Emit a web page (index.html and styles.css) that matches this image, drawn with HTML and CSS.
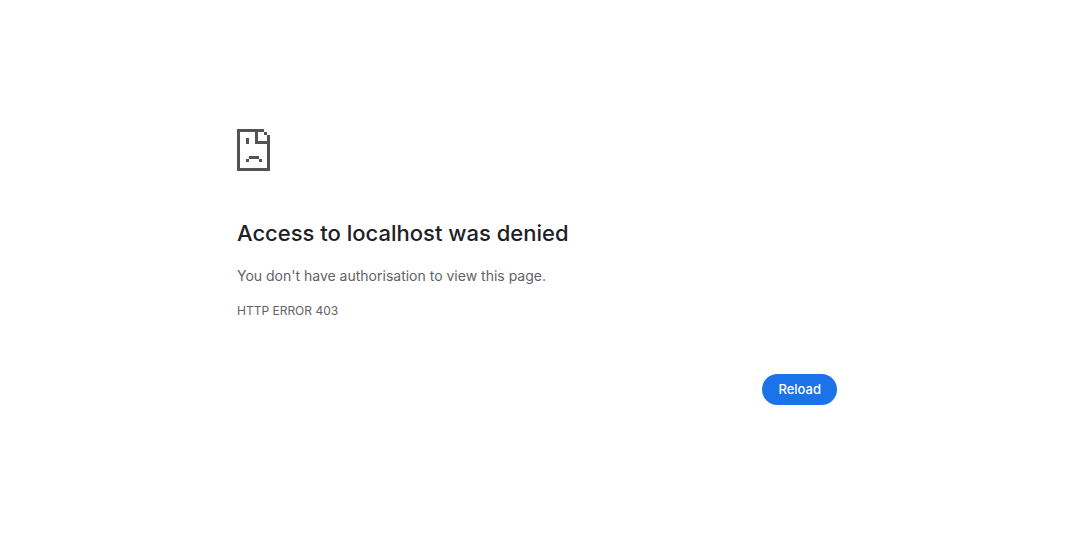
FILE: index.html
```html
<!DOCTYPE html>
<html lang="en-GB">
<head>
<meta charset="utf-8">
<meta name="viewport" content="width=device-width, initial-scale=1">
<title>localhost</title>
<link rel="stylesheet" href="styles.css">
</head>
<body>
<main class="error-page">
  <svg class="error-icon" viewBox="0 0 33 42" shape-rendering="crispEdges" aria-hidden="true">
    <path d="M0 0H27V3H21V12H30V6H33V42H0ZM3 3V39H30V15H18V3ZM27 3H30V6H27ZM9 9H12V15H9ZM12 27H22V30H12ZM9 30H12V33H9ZM22 30H25V33H22Z" fill-rule="evenodd"/>
  </svg>
  <h1 class="error-title">Access to localhost was denied</h1>
  <p class="error-summary">You don't have authorisation to view this page.</p>
  <p class="error-code">HTTP ERROR 403</p>
  <div class="actions">
    <button class="reload-button" type="button">Reload</button>
  </div>
</main>
</body>
</html>
```
FILE: styles.css
```css
body {
  margin: 0;
  padding-right: 14px;
  background: #fff;
  color: #5f6368;
  font-family: Inter, "Liberation Sans", sans-serif;
}

.error-page {
  box-sizing: border-box;
  width: 100%;
  max-width: 600px;
  margin: 0 auto;
  padding-top: 129px;
}

.error-icon {
  display: block;
  width: 33px;
  height: 42px;
  fill: #535353;
}

.error-title {
  margin: 47px 0 16px;
  color: #202124;
  font-size: 22px;
  font-weight: 500;
  line-height: 30px;
}

.error-summary {
  margin: 0;
  font-size: 14px;
  line-height: 24px;
}

.error-code {
  margin: 13px 0 0;
  font-size: 12px;
  line-height: 20px;
}

.actions {
  display: flex;
  justify-content: flex-end;
  margin-top: 53px;
}

.reload-button {
  padding: 8px 16px;
  border: 0;
  border-radius: 20px;
  background: #1a73e8;
  color: #fff;
  font-family: inherit;
  font-size: 13px;
  font-weight: 500;
  line-height: 15px;
  cursor: pointer;
}
```
